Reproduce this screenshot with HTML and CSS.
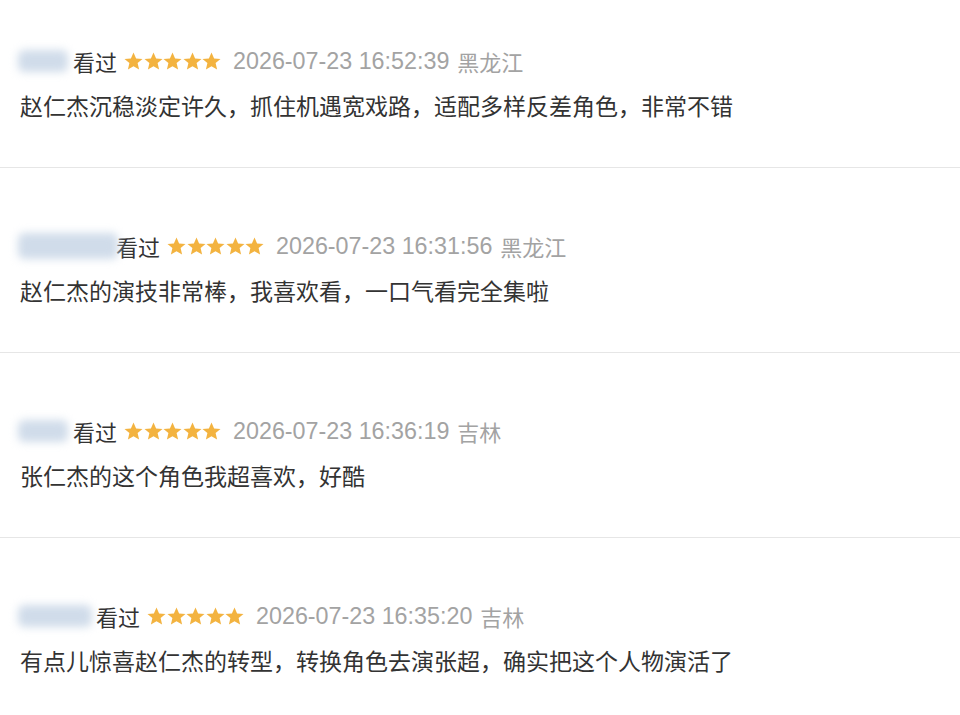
FILE: index.html
```html
<!DOCTYPE html>
<html lang="zh-CN">

<head>
    <meta charset="UTF-8">
    <meta name="viewport" content="width=device-width, initial-scale=1.0">
    <title>短评</title>
    <link rel="stylesheet" href="styles.css">
</head>

<body>
    <svg class="defs" width="0" height="0">
        <symbol id="star" viewBox="0.6 0.6 18.8 18">
            <polygon points="10,1 12.6,7 19,7.5 14.1,11.7 15.6,18.2 10,14.8 4.4,18.2 5.9,11.7 1,7.5 7.4,7" />
        </symbol>
    </svg>

    <div class="comments">
        <div class="comment">
            <div class="meta">
                <span class="user user-short"></span>
                <span class="status">看过</span>
                <span class="stars">
                    <svg><use href="#star" /></svg><svg><use href="#star" /></svg><svg><use href="#star" /></svg><svg><use href="#star" /></svg><svg><use href="#star" /></svg>
                </span>
                <span class="time">2026-07-23 16:52:39</span>
                <span class="place">黑龙江</span>
            </div>
            <p class="text">赵仁杰沉稳淡定许久，抓住机遇宽戏路，适配多样反差角色，非常不错</p>
        </div>

        <div class="comment">
            <div class="meta">
                <span class="user user-long"></span>
                <span class="status">看过</span>
                <span class="stars">
                    <svg><use href="#star" /></svg><svg><use href="#star" /></svg><svg><use href="#star" /></svg><svg><use href="#star" /></svg><svg><use href="#star" /></svg>
                </span>
                <span class="time">2026-07-23 16:31:56</span>
                <span class="place">黑龙江</span>
            </div>
            <p class="text">赵仁杰的演技非常棒，我喜欢看，一口气看完全集啦</p>
        </div>

        <div class="comment">
            <div class="meta">
                <span class="user user-short"></span>
                <span class="status">看过</span>
                <span class="stars">
                    <svg><use href="#star" /></svg><svg><use href="#star" /></svg><svg><use href="#star" /></svg><svg><use href="#star" /></svg><svg><use href="#star" /></svg>
                </span>
                <span class="time">2026-07-23 16:36:19</span>
                <span class="place">吉林</span>
            </div>
            <p class="text">张仁杰的这个角色我超喜欢，好酷</p>
        </div>

        <div class="comment">
            <div class="meta">
                <span class="user user-mid"></span>
                <span class="status">看过</span>
                <span class="stars">
                    <svg><use href="#star" /></svg><svg><use href="#star" /></svg><svg><use href="#star" /></svg><svg><use href="#star" /></svg><svg><use href="#star" /></svg>
                </span>
                <span class="time">2026-07-23 16:35:20</span>
                <span class="place">吉林</span>
            </div>
            <p class="text">有点儿惊喜赵仁杰的转型，转换角色去演张超，确实把这个人物演活了</p>
        </div>
    </div>
</body>

</html>
```

FILE: styles.css
```css
body {
    margin: 0;
    background-color: #fff;
    font-family: "Liberation Sans", "Noto Sans CJK SC", sans-serif;
    color: #333;
    overflow: hidden;
}

.defs {
    position: absolute;
}

.comment {
    padding: 62px 20px 44px 20px;
    border-bottom: 1px solid #e6e6e6;
}

.comment:first-child {
    padding-top: 45px;
}

.meta {
    display: flex;
    align-items: center;
    height: 32px;
    font-size: 22px;
}

/* blurred user name */
.user {
    display: inline-block;
    height: 22px;
    margin-left: -2px;
    background-color: #d0dcea;
    border-radius: 6px;
    filter: blur(4px);
}

.user-short {
    width: 50px;
    margin-right: 5px;
}

.user-mid {
    width: 74px;
    margin-right: 4px;
}

.user-long {
    width: 100px;
    height: 26px;
    margin-right: -2px;
}

.status {
    color: #333;
}

.stars {
    display: flex;
    margin-left: 7px;
    gap: 0.5px;
}

.stars svg {
    width: 19px;
    height: 18px;
    fill: #f3b340;
}

.time {
    margin-left: 12px;
    font-size: 23.3px;
    color: #a3a3a3;
}

.place {
    margin-left: 8px;
    color: #a3a3a3;
}

.text {
    margin: 14px 0 0 0;
    height: 32px;
    line-height: 32px;
    font-size: 23px;
    color: #333;
}
```
